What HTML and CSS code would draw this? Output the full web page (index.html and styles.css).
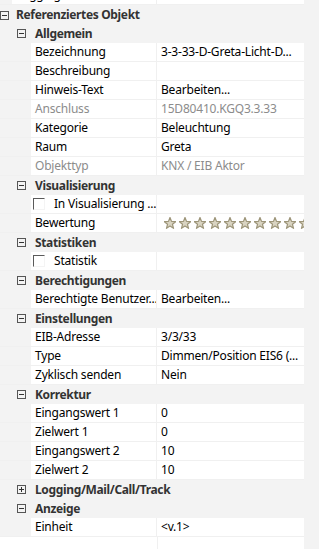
FILE: index.html
```html
<!DOCTYPE html>
<html>
<head>
<meta charset="utf-8">
<link rel="stylesheet" href="styles.css">
</head>
<body>
<div class="grid">
  <div class="row prop p0 first"><div class="lbl">Logging</div><div class="val"></div></div>
  <div class="row cat c0"><span class="exp minus"></span><span class="ct">Referenziertes Objekt</span></div>
  <div class="row cat c1"><span class="exp minus"></span><span class="ct">Allgemein</span></div>
  <div class="row prop"><div class="lbl">Bezeichnung</div><div class="val">3-3-33-D-Greta-Licht-D...</div></div>
  <div class="row prop"><div class="lbl">Beschreibung</div><div class="val"></div></div>
  <div class="row prop"><div class="lbl">Hinweis-Text</div><div class="val">Bearbeiten...</div></div>
  <div class="row prop dis"><div class="lbl">Anschluss</div><div class="val">15D80410.KGQ3.3.33</div></div>
  <div class="row prop"><div class="lbl">Kategorie</div><div class="val">Beleuchtung</div></div>
  <div class="row prop"><div class="lbl">Raum</div><div class="val">Greta</div></div>
  <div class="row prop dis"><div class="lbl">Objekttyp</div><div class="val">KNX / EIB Aktor</div></div>
  <div class="row cat c1"><span class="exp minus"></span><span class="ct">Visualisierung</span></div>
  <div class="row prop"><div class="lbl chk"><span class="box"></span><span>In Visualisierung ...</span></div><div class="val"></div></div>
  <div class="row prop"><div class="lbl">Bewertung</div><div class="val stars">
    <svg class="star" viewBox="0 0 12 12"><polygon points="6,0.5 7.53,4.4 11.71,4.65 8.47,7.3 9.53,11.35 6,9.1 2.47,11.35 3.53,7.3 0.29,4.65 4.47,4.4"/></svg>
    <svg class="star" viewBox="0 0 12 12"><polygon points="6,0.5 7.53,4.4 11.71,4.65 8.47,7.3 9.53,11.35 6,9.1 2.47,11.35 3.53,7.3 0.29,4.65 4.47,4.4"/></svg>
    <svg class="star" viewBox="0 0 12 12"><polygon points="6,0.5 7.53,4.4 11.71,4.65 8.47,7.3 9.53,11.35 6,9.1 2.47,11.35 3.53,7.3 0.29,4.65 4.47,4.4"/></svg>
    <svg class="star" viewBox="0 0 12 12"><polygon points="6,0.5 7.53,4.4 11.71,4.65 8.47,7.3 9.53,11.35 6,9.1 2.47,11.35 3.53,7.3 0.29,4.65 4.47,4.4"/></svg>
    <svg class="star" viewBox="0 0 12 12"><polygon points="6,0.5 7.53,4.4 11.71,4.65 8.47,7.3 9.53,11.35 6,9.1 2.47,11.35 3.53,7.3 0.29,4.65 4.47,4.4"/></svg>
    <svg class="star" viewBox="0 0 12 12"><polygon points="6,0.5 7.53,4.4 11.71,4.65 8.47,7.3 9.53,11.35 6,9.1 2.47,11.35 3.53,7.3 0.29,4.65 4.47,4.4"/></svg>
    <svg class="star" viewBox="0 0 12 12"><polygon points="6,0.5 7.53,4.4 11.71,4.65 8.47,7.3 9.53,11.35 6,9.1 2.47,11.35 3.53,7.3 0.29,4.65 4.47,4.4"/></svg>
    <svg class="star" viewBox="0 0 12 12"><polygon points="6,0.5 7.53,4.4 11.71,4.65 8.47,7.3 9.53,11.35 6,9.1 2.47,11.35 3.53,7.3 0.29,4.65 4.47,4.4"/></svg>
    <svg class="star" viewBox="0 0 12 12"><polygon points="6,0.5 7.53,4.4 11.71,4.65 8.47,7.3 9.53,11.35 6,9.1 2.47,11.35 3.53,7.3 0.29,4.65 4.47,4.4"/></svg>
    <svg class="star" viewBox="0 0 12 12"><polygon points="6,0.5 7.53,4.4 11.71,4.65 8.47,7.3 9.53,11.35 6,9.1 2.47,11.35 3.53,7.3 0.29,4.65 4.47,4.4"/></svg>
  </div></div>
  <div class="row cat c1"><span class="exp minus"></span><span class="ct">Statistiken</span></div>
  <div class="row prop"><div class="lbl chk"><span class="box"></span><span>Statistik</span></div><div class="val"></div></div>
  <div class="row cat c1"><span class="exp minus"></span><span class="ct">Berechtigungen</span></div>
  <div class="row prop"><div class="lbl">Berechtigte Benutzer...</div><div class="val">Bearbeiten...</div></div>
  <div class="row cat c1"><span class="exp minus"></span><span class="ct">Einstellungen</span></div>
  <div class="row prop"><div class="lbl">EIB-Adresse</div><div class="val">3/3/33</div></div>
  <div class="row prop"><div class="lbl">Type</div><div class="val">Dimmen/Position EIS6 (...</div></div>
  <div class="row prop"><div class="lbl">Zyklisch senden</div><div class="val">Nein</div></div>
  <div class="row cat c1"><span class="exp minus"></span><span class="ct">Korrektur</span></div>
  <div class="row prop"><div class="lbl">Eingangswert 1</div><div class="val">0</div></div>
  <div class="row prop"><div class="lbl">Zielwert 1</div><div class="val">0</div></div>
  <div class="row prop"><div class="lbl">Eingangswert 2</div><div class="val">10</div></div>
  <div class="row prop"><div class="lbl">Zielwert 2</div><div class="val">10</div></div>
  <div class="row cat c1"><span class="exp plus"></span><span class="ct">Logging/Mail/Call/Track</span></div>
  <div class="row cat c1"><span class="exp minus"></span><span class="ct">Anzeige</span></div>
  <div class="row prop"><div class="lbl">Einheit</div><div class="val">&lt;v.1&gt;</div></div>
  <div class="filler"><div class="fl"></div><div class="fv"></div></div>
</div>
</body>
</html>
```

FILE: styles.css
```css
html, body {
  margin: 0;
  padding: 0;
  background: #f3f3f3;
  width: 319px;
  height: 549px;
  overflow: hidden;
}
body {
  font-family: "Noto Sans", "Open Sans", sans-serif;
  font-size: 12px;
  letter-spacing: -0.2px;
  color: #000;
}
.grid {
  width: 304px;
  height: 549px;
  display: flex;
  flex-direction: column;
  background: #f3f3f3;
}
.row {
  height: 19px;
  flex: none;
  display: flex;
  align-items: stretch;
  box-sizing: border-box;
  line-height: 18px;
  white-space: nowrap;
}
.first { margin-top: -14px; }
.cat {
  position: relative;
  align-items: center;
  color: #333;
  font-weight: bold;
  letter-spacing: -0.35px;
}
.exp {
  position: absolute;
  top: 5px;
  width: 9px;
  height: 9px;
  box-sizing: border-box;
  border: 1px solid #555;
}
.exp::before {
  content: "";
  position: absolute;
  left: 1px;
  top: 3px;
  width: 5px;
  height: 1px;
  background: #333;
}
.exp.plus::after {
  content: "";
  position: absolute;
  left: 3px;
  top: 1px;
  width: 1px;
  height: 5px;
  background: #333;
}
.c0 .exp { left: 0; top: 6px; }
.c0 .ct { padding-left: 16px; }
.c1 .exp { left: 17px; }
.c1 .ct { padding-left: 35px; }
.prop {
  padding-left: 31px;
  border-bottom: 1px solid #f0f0f0;
  height: 19px;
}
.prop.p0 { padding-left: 12px; }
.lbl {
  width: 126px;
  flex: none;
  background: #fff;
  padding-left: 4px;
  box-sizing: border-box;
  border-right: 1px solid #f0f0f0;
  overflow: hidden;
}
.p0 .lbl { width: 145px; }
.val {
  flex: 1;
  background: #fff;
  padding-left: 4px;
  overflow: hidden;
}
.dis .lbl, .dis .val { color: #8c8c8c; }
.chk {
  display: flex;
  align-items: center;
  padding-left: 2px;
}
.box {
  width: 12px;
  height: 12px;
  box-sizing: border-box;
  border-top: 1px solid #5a5a5a;
  border-left: 1px solid #5a5a5a;
  border-right: 1px solid #f4f4f4;
  border-bottom: 1px solid #f4f4f4;
  margin-right: 9px;
  flex: none;
}
.stars {
  display: flex;
  align-items: center;
  padding-left: 7px;
  gap: 3px;
}
.star {
  width: 12px;
  height: 12px;
  flex: none;
}
.star polygon {
  fill: #d9d4c2;
  stroke: #9d9579;
  stroke-width: 1.2;
  stroke-linejoin: round;
}
.filler {
  flex: 1;
  display: flex;
  background: #fff;
}
.fl {
  width: 157px;
  border-right: 1px solid #f0f0f0;
}
.fv { flex: 1; }
```
